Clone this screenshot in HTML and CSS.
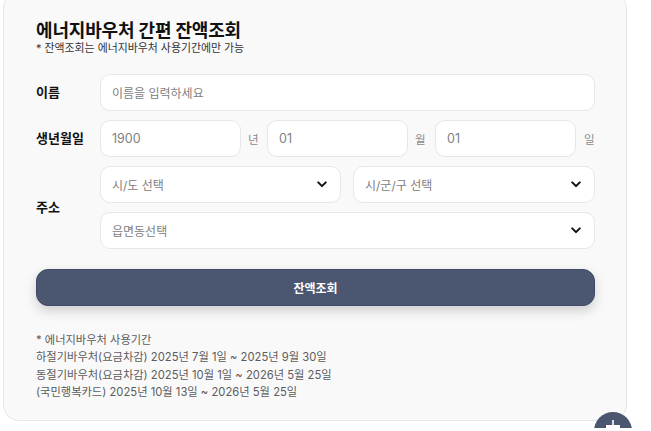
FILE: index.html
```html
<!DOCTYPE html>
<html lang="ko">
<head>
<meta charset="utf-8">
<title>에너지바우처 간편 잔액조회</title>
<link rel="stylesheet" href="styles.css">
</head>
<body>
<div class="page">
<main class="card">
  <header class="head">
    <h1 class="title">에너지바우처 간편 잔액조회</h1>
    <p class="sub">* 잔액조회는 에너지바우처 사용기간에만 가능</p>
  </header>
  <form class="form">
    <div class="row">
      <span class="label">이름</span>
      <div class="field grow"><span class="ph">이름을 입력하세요</span></div>
    </div>
    <div class="row">
      <span class="label">생년월일</span>
      <div class="dates">
        <div class="field grow"><span class="ph num">1900</span></div><span class="unit">년</span>
        <div class="field grow"><span class="ph num">01</span></div><span class="unit">월</span>
        <div class="field grow"><span class="ph num">01</span></div><span class="unit">일</span>
      </div>
    </div>
    <div class="row">
      <span class="label">주소</span>
      <div class="addr">
        <div class="pair">
          <div class="field select"><span class="ph">시/도 선택</span><svg class="chev" viewBox="0 0 12 8"><path d="M1.5 1.5 6 6l4.5-4.5"/></svg></div>
          <div class="field select"><span class="ph">시/군/구 선택</span><svg class="chev" viewBox="0 0 12 8"><path d="M1.5 1.5 6 6l4.5-4.5"/></svg></div>
        </div>
        <div class="field select"><span class="ph">읍면동선택</span><svg class="chev" viewBox="0 0 12 8"><path d="M1.5 1.5 6 6l4.5-4.5"/></svg></div>
      </div>
    </div>
    <button class="btn" type="button">잔액조회</button>
  </form>
  <div class="notes">
    <p>* 에너지바우처 사용기간</p>
    <p>하절기바우처(요금차감) 2025년 7월 1일 ~ 2025년 9월 30일</p>
    <p>동절기바우처(요금차감) 2025년 10월 1일 ~ 2026년 5월 25일</p>
    <p>(국민행복카드) 2025년 10월 13일 ~ 2026년 5월 25일</p>
  </div>
</main>
<div class="fab"><svg class="fab-icon" viewBox="0 0 16 16"><path d="M7.2 0h1.6v5H15v3H1V5h6.2z"/></svg></div>
</div>
</body>
</html>
```
FILE: styles.css
```css
* { box-sizing: border-box; }
body {
  margin: 0;
  background: #fff;
  font-family: "Inter", "Noto Sans CJK KR", sans-serif;
  color: #111;
}
.page {
  position: relative;
  height: 428px;
  overflow: hidden;
  padding-left: 3px;
}
.card {
  width: 624px;
  height: 429px;
  margin-top: -8px;
  padding: 26px 31px 0 32px;
  background: #f9f9fa;
  border: 1px solid #e6e7e9;
  border-radius: 16px;
}
.head { height: 48px; }
.title {
  margin: 0;
  font-size: 18px;
  line-height: 24px;
  font-weight: 700;
  letter-spacing: -0.16px;
  color: #111;
}
.sub {
  margin: -2px 0 0;
  font-size: 10.9px;
  line-height: 14px;
  color: #333;
}
.form { margin-top: 7.3px; display: flex; flex-direction: column; gap: 8.8px; }
.row { display: flex; align-items: center; }
.label {
  flex: 0 0 64px;
  padding-bottom: 2px;
  font-size: 13px;
  font-weight: 700;
  color: #111;
}
.field {
  display: flex;
  align-items: center;
  height: 37px;
  padding: 0 12px;
  background: #fff;
  border: 1px solid #e5e7eb;
  border-radius: 10px;
  min-width: 0;
}
.grow { flex: 1; }
.ph { font-size: 12px; color: #808080; margin-left: -1px; }
.ph.num { font-size: 12.5px; }
.dates { flex: 1; display: flex; align-items: center; }
.dates .field { flex: 0 0 141px; }
.unit {
  flex: 1;
  padding-left: 7px;
  font-size: 11.5px;
  color: #8a8a8a;
}
.dates .unit:first-of-type { flex: 0 0 26px; }
.dates .unit:last-child { flex: 0 0 19px; padding-left: 8px; }
.addr { flex: 1; display: flex; flex-direction: column; gap: 8.8px; }
.pair { display: grid; grid-template-columns: 241px 1fr; gap: 12px; }
.select { justify-content: space-between; padding-right: 13px; }
.chev { width: 10px; height: 7px; }
.chev path { fill: none; stroke: #111; stroke-width: 2.4; stroke-linecap: round; stroke-linejoin: round; }
.btn {
  height: 37.5px;
  margin-top: 11.5px;
  padding: 0 0 1px;
  border: 1px solid #3f4b66;
  border-radius: 12px;
  background: #4b5670;
  color: #fff;
  font: 700 12px "Inter", "Noto Sans CJK KR", sans-serif;
  box-shadow: 0 5px 12px rgba(0, 0, 0, .17);
}
.notes { margin-top: 25.5px; }
.notes p {
  margin: 0;
  font-size: 11.25px;
  line-height: 17.3px;
  color: #5c5c5c;
}
.fab {
  position: absolute;
  left: 594px;
  top: 412px;
  width: 38px;
  height: 38px;
  border-radius: 50%;
  background: #4b5670;
  display: flex;
  justify-content: center;
  padding-top: 8px;
}
.fab-icon { width: 16px; height: 16px; fill: #fff; }
```
